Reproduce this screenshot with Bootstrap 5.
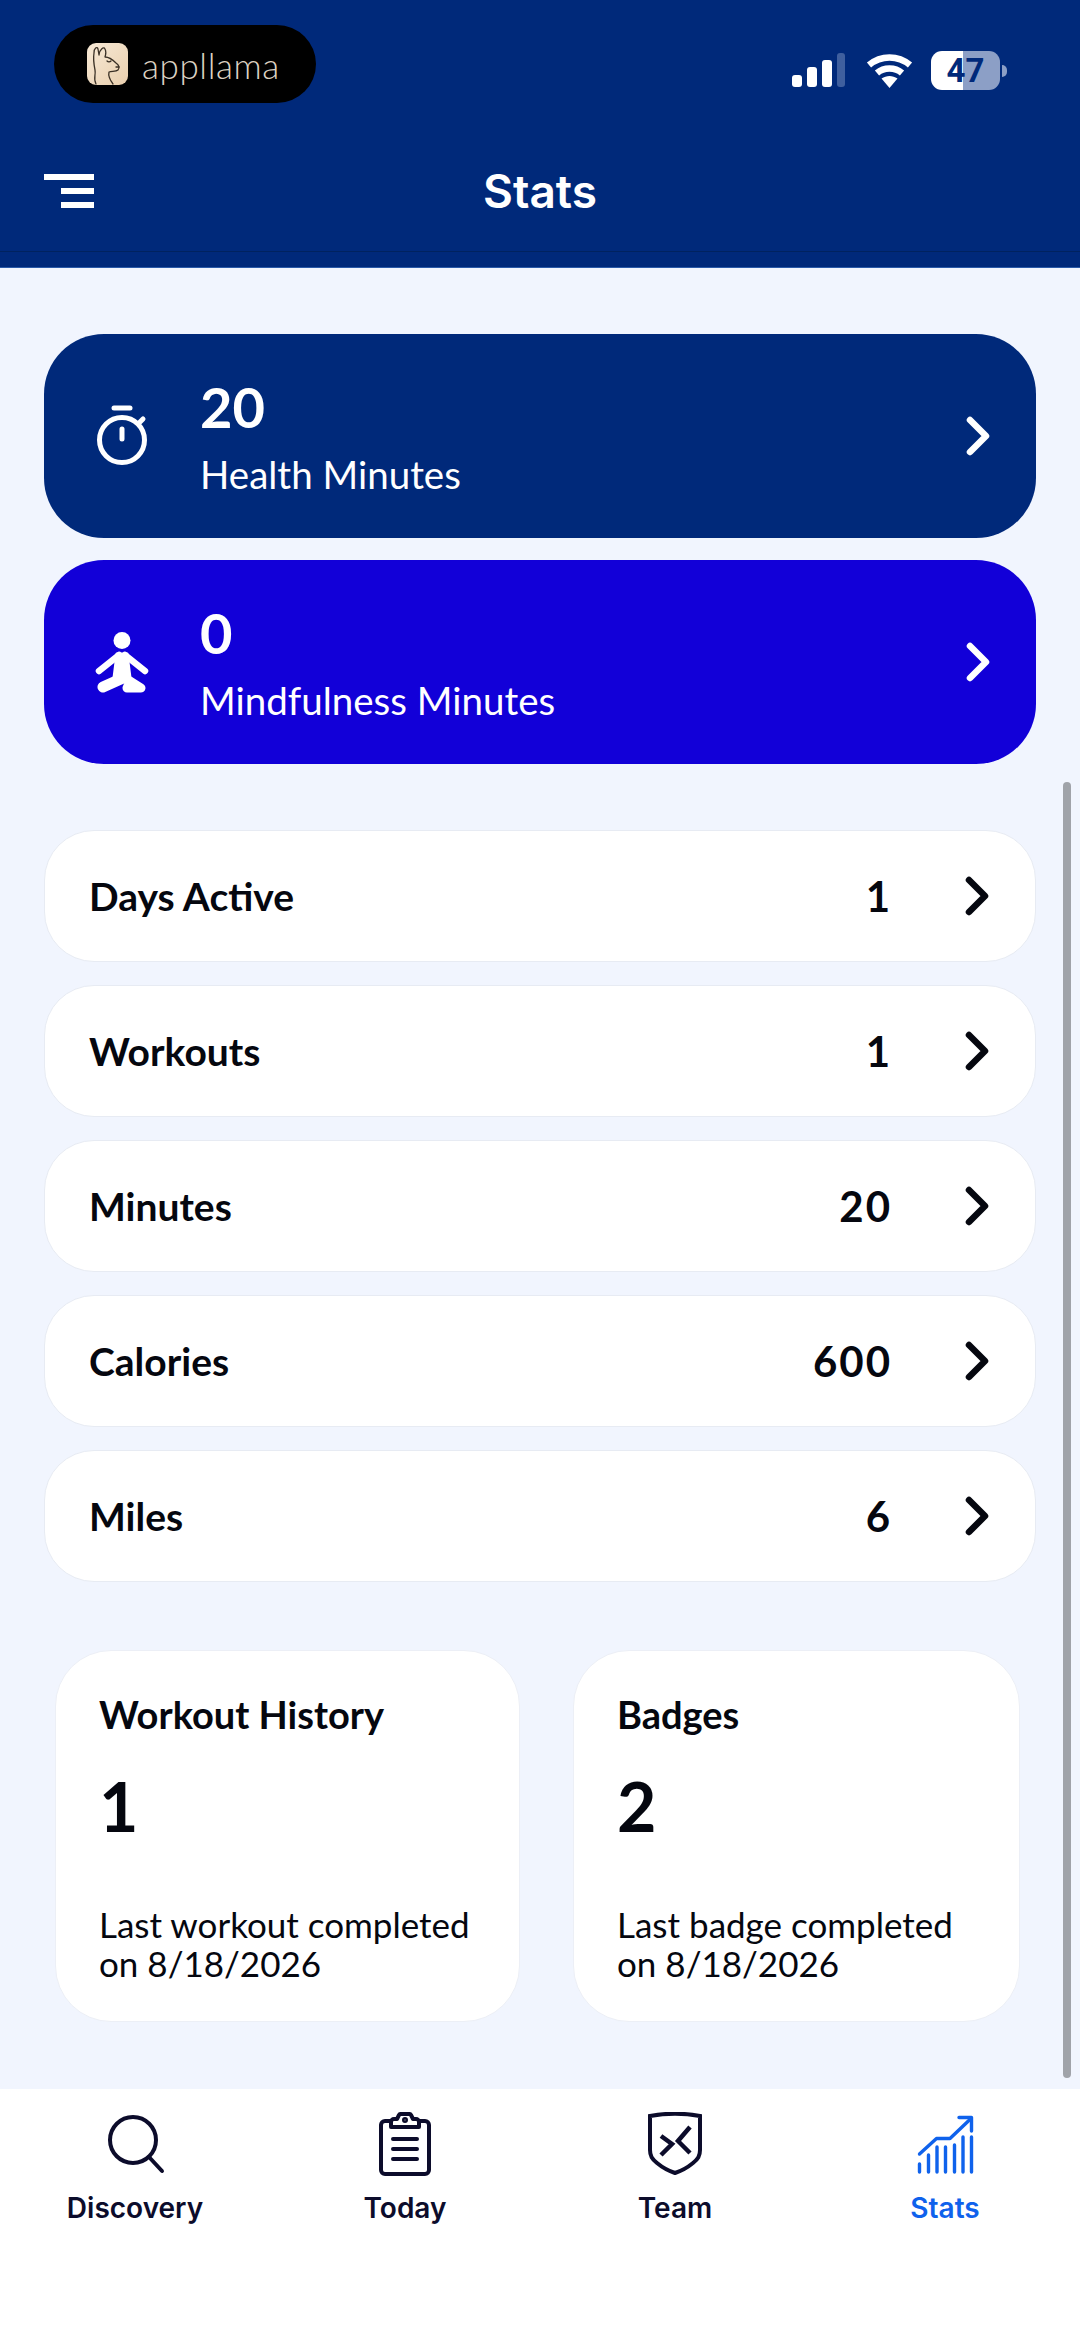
<!DOCTYPE html>
<html lang="en">
<head>
<meta charset="UTF-8">
<title>Stats</title>
<link href="https://cdn.jsdelivr.net/npm/bootstrap@5.3.3/dist/css/bootstrap.min.css" rel="stylesheet">
<style>
html, body { height: 100%; }
body { background: #f1f5fe; font-family: Lato, "Liberation Sans", sans-serif; color: #05070f; overflow: hidden; }
.screen { height: 2337px; position: relative; }
.top-head { background: #00297a; height: 268px; border-bottom: 1px solid #2a5aa8; flex: none; }
.status-line { height: 127px; padding: 25px 73px 0 54px; }
.app-pill { width: 262px; height: 78px; background: #000; border-radius: 39px; padding-left: 33px; gap: 14px; }
.llama-box { width: 41px; height: 42px; border-radius: 9px; background: linear-gradient(135deg, #f7e9d6, #e9cfae); }
.pill-text { font-size: 35px; font-weight: 300; color: #dcd2c2; line-height: 42px; margin-top: 1px; letter-spacing: .6px; }
.status-icons { margin-top: 26px; }
.signal-ico { margin-right: 21px; }
.batt { width: 69px; height: 39px; border-radius: 11px; margin-left: 18px; background: linear-gradient(90deg, #fff 0 46%, #8c9fc6 46% 100%); color: #00297a; font: 700 33px/39px Roboto, sans-serif; text-align: center; }
.batt-tip { width: 5px; height: 12px; border-radius: 0 6px 6px 0; background: #8c9fc6; margin-left: 2px; }
.title-line { height: 125px; display: grid; grid-template-columns: 1fr auto 1fr; padding: 3px 44px 0; border-bottom: 1px solid #00225f; align-items: center; }
.burger { display: flex; flex-direction: column; align-items: flex-end; gap: 8px; width: 50px; }
.burger i { display: block; height: 6px; width: 33px; background: #fff; }
.burger i:first-child { width: 50px; }
.head-title { font: 600 46px/50px Inter, sans-serif; color: #fff; margin: 0; }
.stat-main { padding: 66px 44px 0; flex: 1 1 auto; }
.hero-tile { height: 204px; border-radius: 60px; border: 0; color: #fff; padding: 0 46px 0 50px; margin-bottom: 22px; }
.hero-navy { background: #00297a; }
.hero-blue { background: #1200d8; }
.hero-icon { width: 56px; height: 64px; margin-right: 50px; }
.hero-num { font-size: 56px; font-weight: 700; line-height: 62px; margin-top: 3px; }
.hero-label { font-size: 38.5px; line-height: 50px; font-weight: 400; margin-top: 11px; }
.stat-list { margin-top: 66px; gap: 23px; }
.stat-row { height: 132px; border-radius: 50px; border: 1px solid #e7ebf3; background: #fff; padding: 0 46px 0 44px; font-size: 39px; font-weight: 700; }
.stat-val { margin-right: 73px; font-size: 42px; letter-spacing: 2px; }
.chev { width: 24px; height: 40px; flex: none; }
.tile-pair { margin: 68px 10px 0 11px; gap: 53px; }
.info-tile { height: 372px; border-radius: 56px; background: #fff; border: 1px solid #eceff6; padding: 40px 30px 0 43px; flex: none; }
.tile-left { width: 465px; }
.tile-right { width: 447px; }
.tile-head { font-size: 38px; font-weight: 700; line-height: 46px; }
.tile-num { font-size: 68px; font-weight: 700; line-height: 80px; margin-top: 29px; }
.tile-note { font-size: 35px; line-height: 39px; margin-top: 59px; }
.bottom-nav { height: 248px; background: #fff; flex: none; padding-top: 23px; font: 600 28px/34px Inter, sans-serif; color: #0c0c2b; }
.nav-ico { width: 64px; height: 64px; display: block; margin: 0 auto 15px; }
.is-active { color: #0f62ec; }
.scroll-thumb { position: absolute; left: 1063px; top: 782px; width: 8px; height: 1296px; border-radius: 4px; background: #a0a3a9; }
</style>
</head>
<body>
<div class="screen d-flex flex-column">
    <header class="top-head">
        <div class="status-line d-flex justify-content-between align-items-start">
            <div class="app-pill d-flex align-items-center">
                <svg class="llama-box" viewBox="0 0 41 42" fill="none" stroke="#3b3126" stroke-width="1.3" stroke-linecap="round" stroke-linejoin="round"><path d="M9 41c-3-5 0-9-1-14-1-5-2-11-1-17 0-5 3-7 4-4l1 6c0-5 5-9 6-6 1 2 1 5 0 8 4 0 8 3 11 6 3 2 4 5 2 7-2 2-6 1-9 2-1 4 1 8 4 12"/><path d="M20 18c1 1 3 1 4 0M29 24h3"/></svg>
                <span class="pill-text">appllama</span>
            </div>
            <div class="status-icons d-flex align-items-center">
                <svg class="signal-ico" width="53" height="35" viewBox="0 0 53 35"><rect x="0" y="22" width="10" height="12" rx="3" fill="#fff"/><rect x="15" y="14" width="10" height="20" rx="3" fill="#fff"/><rect x="30" y="7" width="10" height="27" rx="3" fill="#fff"/><rect x="45" y="0" width="8" height="34" rx="3" fill="#3f5f9e"/></svg>
                <svg width="47" height="34" viewBox="0 0 47 34" fill="none" stroke="#fff" stroke-width="6.5"><path d="M3 11c12-10 29-10 41 0"/><path d="M11 19c7-6 18-6 25 0"/><path d="M15.500 24.500 23.500 34 31.500 24.500c-5-3.500-11-3.500-16 0z" fill="#fff" stroke="none"/></svg>
                <div class="batt">47</div>
                <div class="batt-tip"></div>
            </div>
        </div>
        <div class="title-line">
            <div class="burger"><i></i><i></i><i></i></div>
            <h1 class="head-title">Stats</h1>
            <div></div>
        </div>
    </header>

    <main class="stat-main">
        <div class="card hero-tile hero-navy flex-row align-items-center">
            <svg class="hero-icon" viewBox="0 0 56 64" fill="none" stroke="#fff" stroke-width="5" stroke-linecap="round"><path d="M20 4h16"/><circle cx="28" cy="36" r="22.500"/><path d="M28 25v10M46 18l3-3"/></svg>
            <div class="flex-grow-1">
                <div class="hero-num">20</div>
                <div class="hero-label">Health Minutes</div>
            </div>
            <svg class="chev" viewBox="0 0 24 40" fill="none" stroke="#fff" stroke-width="6.500" stroke-linecap="round" stroke-linejoin="round"><path d="M4 4l16 16L4 36"/></svg>
        </div>
        <div class="card hero-tile hero-blue flex-row align-items-center">
            <svg class="hero-icon" viewBox="0 0 56 64" fill="#fff" stroke="#fff" stroke-linecap="round" stroke-linejoin="round"><circle cx="28" cy="10.500" r="8.500" stroke="none"/><path d="M23 24h10l3 24H20z" stroke-width="3"/><path d="M25 25 5 41M31 25l20 16" fill="none" stroke-width="6.500"/><path d="M9 57 29 48" fill="none" stroke-width="11"/><path d="M36 51l11 7H33z" stroke-width="9"/></svg>
            <div class="flex-grow-1">
                <div class="hero-num">0</div>
                <div class="hero-label">Mindfulness Minutes</div>
            </div>
            <svg class="chev" viewBox="0 0 24 40" fill="none" stroke="#fff" stroke-width="6.500" stroke-linecap="round" stroke-linejoin="round"><path d="M4 4l16 16L4 36"/></svg>
        </div>

        <div id="statList" class="stat-list d-flex flex-column"></div>

        <div class="tile-pair d-flex">
            <div class="info-tile tile-left">
                <div class="tile-head">Workout History</div>
                <div class="tile-num">1</div>
                <div class="tile-note">Last workout completed on 8/18/2026</div>
            </div>
            <div class="info-tile tile-right">
                <div class="tile-head">Badges</div>
                <div class="tile-num">2</div>
                <div class="tile-note">Last badge completed on 8/18/2026</div>
            </div>
        </div>
    </main>

    <nav class="bottom-nav row g-0 text-center">
        <div class="col-3">
            <svg class="nav-ico" viewBox="0 0 64 64" fill="none" stroke="#0c0c2b" stroke-width="4" stroke-linecap="round"><circle cx="30" cy="28" r="23"/><path d="M46 45l13 14"/></svg>
            Discovery
        </div>
        <div class="col-3">
            <svg class="nav-ico" viewBox="0 0 64 64" fill="none" stroke="#0c0c2b" stroke-width="4" stroke-linecap="round" stroke-linejoin="round"><path d="M18 9h-6a4 4 0 0 0-4 4v45a4 4 0 0 0 4 4h40a4 4 0 0 0 4-4V13a4 4 0 0 0-4-4h-6"/><path d="M18 15v-5a3 3 0 0 1 3-3h3l2-4a2 2 0 0 1 2-1h8a2 2 0 0 1 2 1l2 4h3a3 3 0 0 1 3 3v5z"/><path d="M20 27h24M20 37h24M20 47h24"/><circle cx="32" cy="8" r="1" fill="#0c0c2b"/></svg>
            Today
        </div>
        <div class="col-3">
            <svg class="nav-ico" viewBox="0 0 64 64" fill="none" stroke="#0c0c2b" stroke-width="4"><path d="M7 4c16-3 34-3 50 0v34c0 6-2 9-7 13-6 5-12 8-18 10-6-2-12-5-18-10-5-4-7-7-7-13z"/><path d="M18 24l11 8-11 11M47 15 35 29l12 12" stroke-width="4.500"/></svg>
            Team
        </div>
        <div class="col-3 is-active">
            <svg class="nav-ico" viewBox="0 0 64 64" fill="none" stroke="#0f62ec" stroke-width="3.400" stroke-linecap="round" stroke-linejoin="round"><path d="M6.500 42 23.500 26.500H37L58 6.500"/><path d="M46 5.500h12.500V19"/><path d="M6.500 52v8M15.500 43v17M24 35v25M32.500 35v25M41.500 33v27M50 25v35M58.500 25v35"/></svg>
            Stats
        </div>
    </nav>
    <div class="scroll-thumb"></div>
</div>

<script src="https://cdn.jsdelivr.net/npm/bootstrap@5.3.3/dist/js/bootstrap.bundle.min.js"></script>
<script>
    const stats = [["Days Active", 1], ["Workouts", 1], ["Minutes", 20], ["Calories", 600], ["Miles", 6]];
    const lista = document.getElementById("statList");
    stats.forEach(s => {
        const fila = document.createElement("div");
        fila.className = "stat-row d-flex align-items-center";
        fila.innerHTML = `
            <span class="flex-grow-1">${s[0]}</span>
            <span class="stat-val">${s[1]}</span>
            <svg class="chev" viewBox="0 0 24 40" fill="none" stroke="#05070f" stroke-width="6.500" stroke-linecap="round" stroke-linejoin="round"><path d="M4 4l16 16L4 36"/></svg>`;
        lista.appendChild(fila);
    });
</script>
</body>
</html>
